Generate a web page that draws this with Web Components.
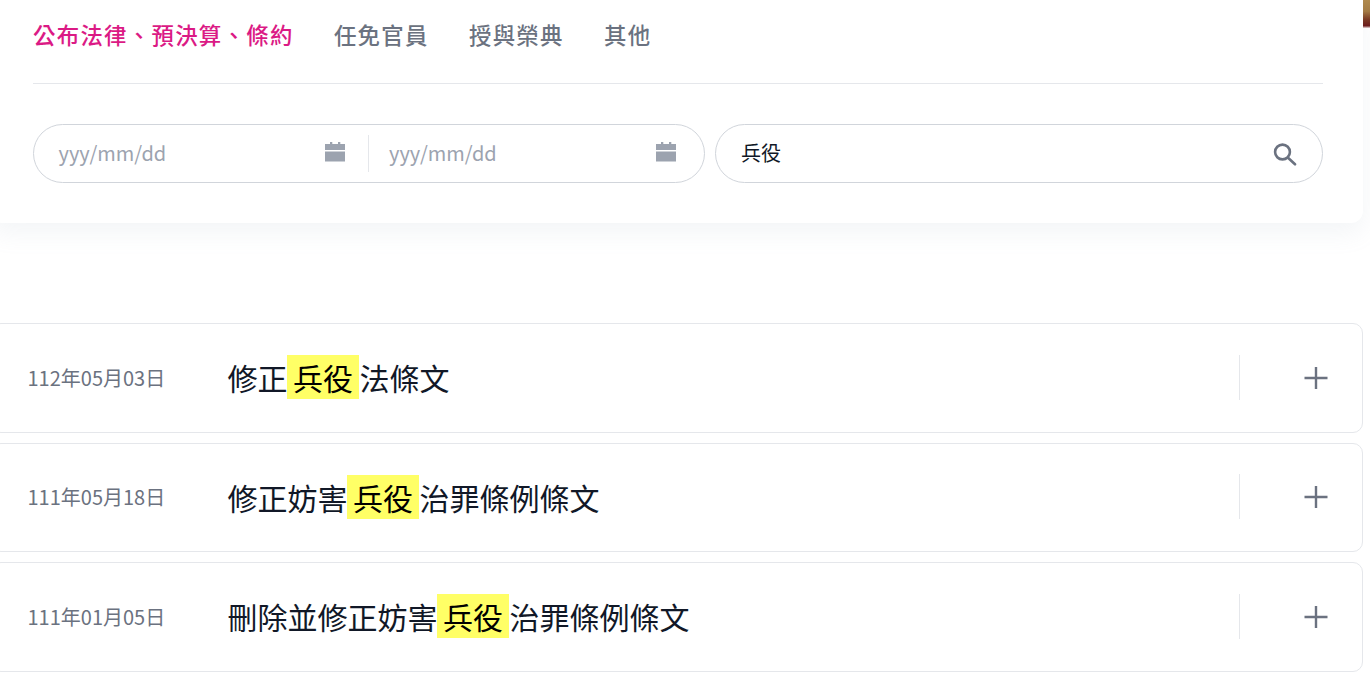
<!DOCTYPE html>
<html lang="zh-Hant"><head><meta charset="utf-8"><title>法令</title>
<style>
html,body{margin:0;padding:0;background:#fff;height:682px;overflow:hidden}
body{font-family:"Noto Sans CJK TC","Noto Sans",sans-serif;color:#111827}
</style></head><body>
<gazette-page>
<filter-card>
  <tab-item active>公布法律、預決算、條約</tab-item>
  <tab-item>任免官員</tab-item>
  <tab-item>授與榮典</tab-item>
  <tab-item>其他</tab-item>
  <date-field slot="dates" placeholder="yyy/mm/dd"></date-field>
  <date-field slot="dates" placeholder="yyy/mm/dd" divided></date-field>
  <search-field slot="search" value="兵役"></search-field>
</filter-card>
<result-row date="112年05月03日">修正<mark-word>兵役</mark-word>法條文</result-row>
<result-row date="111年05月18日">修正妨害<mark-word>兵役</mark-word>治罪條例條文</result-row>
<result-row date="111年01月05日">刪除並修正妨害<mark-word>兵役</mark-word>治罪條例條文</result-row>
</gazette-page>
<script>
function def(name, html){
  customElements.define(name, class extends HTMLElement{
    connectedCallback(){
      if(this.shadowRoot) return;
      const r=this.attachShadow({mode:'open'});
      r.innerHTML=typeof html==='function'?html(this):html;
    }
  });
}
def('gazette-page',`<style>
:host{display:block;width:1372px;margin-left:-9px;position:relative}
.wrap{width:1372px;display:flex;flex-direction:column}
.corner{position:absolute;left:1372px;top:0;width:7px;height:28px;background:linear-gradient(#b08a4e 0,#a47c45 40%,#7a3a24 70%,#6d1c1c 92%,#e8dcdc 100%)}
</style><div class="corner"></div><div class="wrap"><slot></slot></div>`);
def('filter-card',`<style>
:host{display:block;height:223px;box-sizing:border-box;padding:0 40px 0 42px;background:#fff;border-radius:0 0 12px 12px;box-shadow:0 10px 25px rgba(148,163,184,.11);margin-bottom:100px}
.tabs{display:flex;gap:40.3px;padding-top:18px;box-sizing:border-box;border-bottom:1px solid #e5e7eb;height:84px}
.filters{display:flex;gap:10px;margin-top:40px}
.dates{display:flex;align-items:center;width:672px;height:59px;box-sizing:border-box;border:1px solid #d1d5db;border-radius:30px}
.search{display:block;flex:1}
</style><div class="tabs"><slot></slot></div>
<div class="filters"><div class="dates"><slot name="dates"></slot></div><div class="search"><slot name="search"></slot></div></div>`);
def('tab-item',`<style>
:host{display:block;font-size:22.4px;line-height:32px;font-weight:500;letter-spacing:1.3px;color:#6b7280;white-space:nowrap}
:host([active]){color:#db1a85}
</style><slot></slot>`);
def('date-field',e=>`<style>
:host{display:flex;align-items:center;flex:none;width:334px;height:37px;box-sizing:border-box;padding:0 23px 0 24.5px;font-size:20px;color:#9ca3af;font-family:"Noto Sans CJK TC",sans-serif}
:host([divided]){border-left:1px solid #e5e7eb;padding:0 20px 0 20px;width:328px}
span{flex:1;line-height:37px;padding-bottom:2px}
svg{width:20px;height:20px;display:block;margin-bottom:3px}
</style><span>${e.getAttribute('placeholder')}</span>
<svg viewBox="0 0 20 20"><path fill="#9ca3af" d="M5 0h2.300v2.500H5zM13 0h2.300v2.500H13zM0 2h20v6H0zM0 9.500h20V19.500H0z"/></svg>`);
def('search-field',e=>`<style>
:host{display:flex;align-items:center;height:59px;box-sizing:border-box;border:1px solid #d1d5db;border-radius:30px;padding:0 25px;font-size:20px;color:#111827}
span{flex:1;line-height:28px;padding-bottom:2px}
svg{width:24px;height:24px;display:block}
</style><span>${e.getAttribute('value')}</span>
<svg viewBox="0 0 24 24" fill="none" stroke="#6b7280" stroke-width="2.6" stroke-linecap="round"><circle cx="9.500" cy="10" r="7.400"/><path d="M15 15.800l7 6.500"/></svg>`);
def('result-row',e=>`<style>
:host{display:flex;align-items:center;height:109.5px;box-sizing:border-box;border:1px solid #e5e7eb;border-radius:10px;background:#fff;margin-bottom:10px;padding-bottom:1.5px}
.date{width:235.500px;box-sizing:border-box;padding-left:35.500px;font-size:20px;color:#6b7280;white-space:nowrap}
.title{flex:1;font-size:30px;line-height:44px;color:#111827;white-space:nowrap}
.act{width:123px;height:45px;border-left:1px solid #e5e7eb;display:flex;align-items:center;justify-content:flex-end;padding:1.5px 34px 0 0;box-sizing:border-box}
svg{width:24px;height:24px;display:block}
</style><div class="date">${e.getAttribute('date')}</div><div class="title"><slot></slot></div>
<div class="act"><svg viewBox="0 0 24 24"><path stroke="#6b7280" stroke-width="2.4" d="M12 1v22M.500 12h23" fill="none"/></svg></div>`);
def('mark-word',`<style>
:host{display:inline;background:#ffff66;color:#000;padding:0 6px;margin:0 .5px 0 -.5px}
</style><slot></slot>`);
</script>
</body></html>
